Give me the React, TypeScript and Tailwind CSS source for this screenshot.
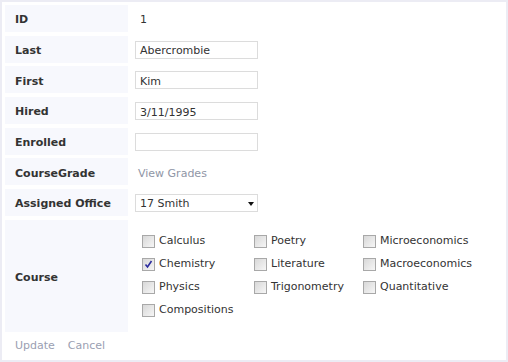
import { useState } from "react";

const courses = [
  "Calculus",
  "Poetry",
  "Microeconomics",
  "Chemistry",
  "Literature",
  "Macroeconomics",
  "Physics",
  "Trigonometry",
  "Quantitative",
  "Compositions",
];

function Label({ children, tall }: { children: React.ReactNode; tall?: boolean }) {
  return (
    <div
      className={`bg-[#f7f8fd] pl-[10px] pt-[4px] flex items-center font-bold text-[#333] ${
        tall ? "h-[112px]" : "h-[27px]"
      }`}
    >
      {children}
    </div>
  );
}

function TextBox({ value }: { value: string }) {
  return (
    <div className="h-[27px] flex items-center pt-[1px]">
      <div className="w-[123px] h-[18px] border border-[#dcdcdc] bg-white pl-[4px] pt-[2px] flex items-center text-[#333] leading-none">
        {value}
      </div>
    </div>
  );
}

function Check({ label, checked }: { label: string; checked?: boolean }) {
  return (
    <div className="flex items-center h-[23px]">
      <span className="w-[13px] h-[13px] border border-[#a8a8a8] bg-gradient-to-br from-[#d8d8d8] to-[#f6f6f6] flex items-center justify-center">
        {checked && (
          <svg width="9" height="9" viewBox="0 0 9 9">
            <path d="M1.5 4.5 L3.5 7 L7.5 1" fill="none" stroke="#2b2b9e" strokeWidth="1.6" />
          </svg>
        )}
      </span>
      <span className="ml-[4px] text-[#333]">{label}</span>
    </div>
  );
}

export default function App() {
  const [checked] = useState<Record<string, boolean>>({ Chemistry: true });

  return (
    <div
      className="w-[508px] h-[362px] border-2 border-[#ececf4] bg-white text-[11px] p-[3px]"
      style={{ fontFamily: '"DejaVu Sans", Verdana, sans-serif' }}
    >
      <div className="grid grid-cols-[123px_1fr] gap-x-[7px] gap-y-[3.7px]">
        <Label>ID</Label>
        <div className="h-[27px] flex items-center pl-[5px] pt-[4px] text-[#333]">1</div>

        <Label>Last</Label>
        <TextBox value="Abercrombie" />

        <Label>First</Label>
        <TextBox value="Kim" />

        <Label>Hired</Label>
        <TextBox value="3/11/1995" />

        <Label>Enrolled</Label>
        <TextBox value="" />

        <Label>CourseGrade</Label>
        <div className="h-[27px] flex items-center pl-[3px] pt-[4px] text-[#9096a6]">View Grades</div>

        <Label>Assigned Office</Label>
        <div className="h-[27px] flex items-center pt-[1px]">
          <div className="w-[123px] h-[18px] border border-[#dcdcdc] bg-white pl-[4px] pr-[3px] pt-[2px] flex items-center justify-between text-[#333]">
            <span>17 Smith</span>
            <svg width="6" height="4" viewBox="0 0 6 4" className="-mt-[1px]">
              <path d="M0 0 H6 L3 4 Z" fill="#111" />
            </svg>
          </div>
        </div>

        <Label tall>Course</Label>
        <div className="h-[112px] flex items-center pl-[7px]">
          <div className="grid grid-cols-[112px_109px_1fr] w-full">
            {courses.map((c) => (
              <Check key={c} label={c} checked={checked[c]} />
            ))}
          </div>
        </div>
      </div>
      <div className="flex gap-[13px] pl-[10px] pt-[6px] text-[#9aa0b2]">
        <span>Update</span>
        <span>Cancel</span>
      </div>
    </div>
  );
}
